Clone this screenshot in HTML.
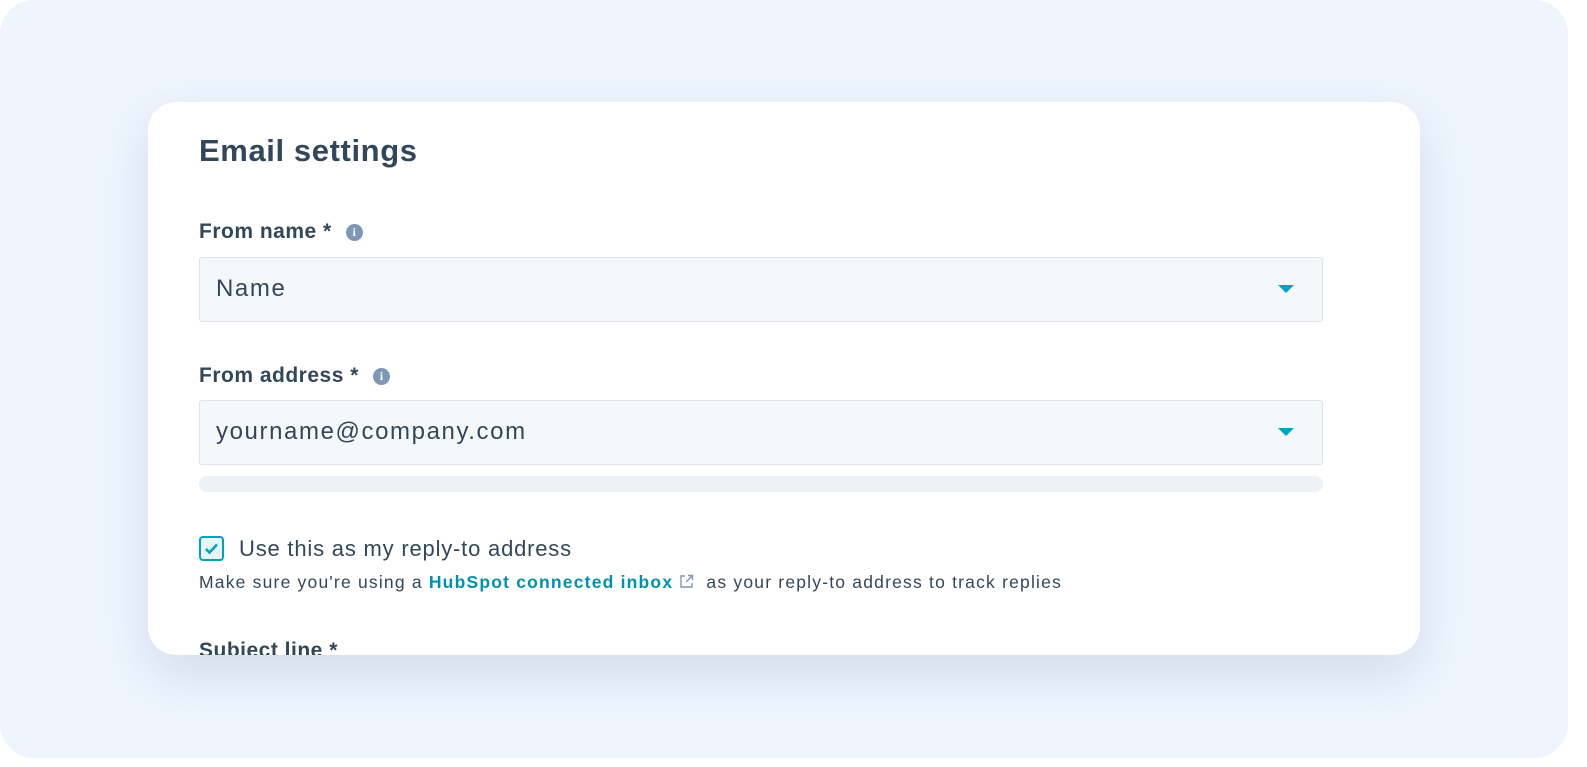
<!DOCTYPE html>
<html><head><style>
html,body{margin:0;padding:0;background:#fff;}
body{width:1587px;height:767px;position:relative;overflow:hidden;font-family:"Liberation Sans",sans-serif;}
.bg{position:absolute;left:0;top:0;width:1568px;height:758px;background:#eef5fd;border-radius:34px;}
.card{position:absolute;left:148px;top:102px;width:1272px;height:553px;background:#fff;border-radius:28px;box-shadow:0 20px 50px rgba(90,110,150,0.18);overflow:hidden;}
.abs{position:absolute;white-space:nowrap;}
h1{position:absolute;left:51px;top:31px;margin:0;font-size:31px;font-weight:bold;color:#33475b;letter-spacing:0.6px;}
.lbl{font-size:21px;font-weight:bold;color:#33475b;letter-spacing:0.5px;}
.info{display:inline-block;width:17px;height:17px;border-radius:50%;background:#7c98b6;color:#fff;font-size:12px;font-weight:bold;text-align:center;line-height:17px;margin-left:14px;vertical-align:2px;font-family:"Liberation Serif",serif;letter-spacing:0;}
.inp{position:absolute;left:51px;width:1122px;height:63px;background:#f5f8fa;border:1px solid #dfe3eb;border-radius:3px;}
.inp span{position:absolute;left:16px;top:17px;font-size:24px;color:#33475b;letter-spacing:1.6px;}
.caret{position:absolute;right:28px;top:27px;width:0;height:0;border-left:8px solid transparent;border-right:8px solid transparent;border-top:8px solid #00a4bd;}
</style></head><body>
<div class="bg"></div>
<div class="card">
<h1>Email settings</h1>
<div class="abs lbl" style="left:51px;top:118px;">From name *<span class="info">i</span></div>
<div class="inp" style="top:155px;"><span>Name</span><div class="caret"></div></div>
<div class="abs lbl" style="left:51px;top:262px;">From address *<span class="info">i</span></div>
<div class="inp" style="top:298px;"><span>yourname@company.com</span><div class="caret"></div></div>
<div class="abs" style="left:51px;top:374px;width:1124px;height:16px;background:#eef1f5;border-radius:8px;"></div>
<div class="abs" style="left:51px;top:434px;width:25px;height:25px;border:2px solid #00a4bd;border-radius:4px;box-sizing:border-box;background:#e5f5f8;">
<svg width="21" height="21" viewBox="0 0 21 21" style="position:absolute;left:0;top:0"><path d="M5 11l3.5 3.5L16 6.5" fill="none" stroke="#00a4bd" stroke-width="2.6"/></svg></div>
<div class="abs" style="left:91px;top:434px;font-size:22px;color:#33475b;letter-spacing:0.8px;">Use this as my reply-to address</div>
<div class="abs" style="left:51px;top:470px;font-size:17.5px;color:#33475b;letter-spacing:1.2px;">Make sure you're using a <b style="color:#0091ae">HubSpot connected inbox</b> <svg width="15" height="15" viewBox="0 0 15 15" style="vertical-align:-1px"><path d="M6 2H2v11h11V9M9 1.5h4.5V6M13.5 1.5L7 8" fill="none" stroke="#7c98b6" stroke-width="1.4"/></svg>&nbsp; as your reply-to address to track replies</div>
<div class="abs lbl" style="left:51px;top:537px;">Subject line *</div>
</div>
</body></html>
